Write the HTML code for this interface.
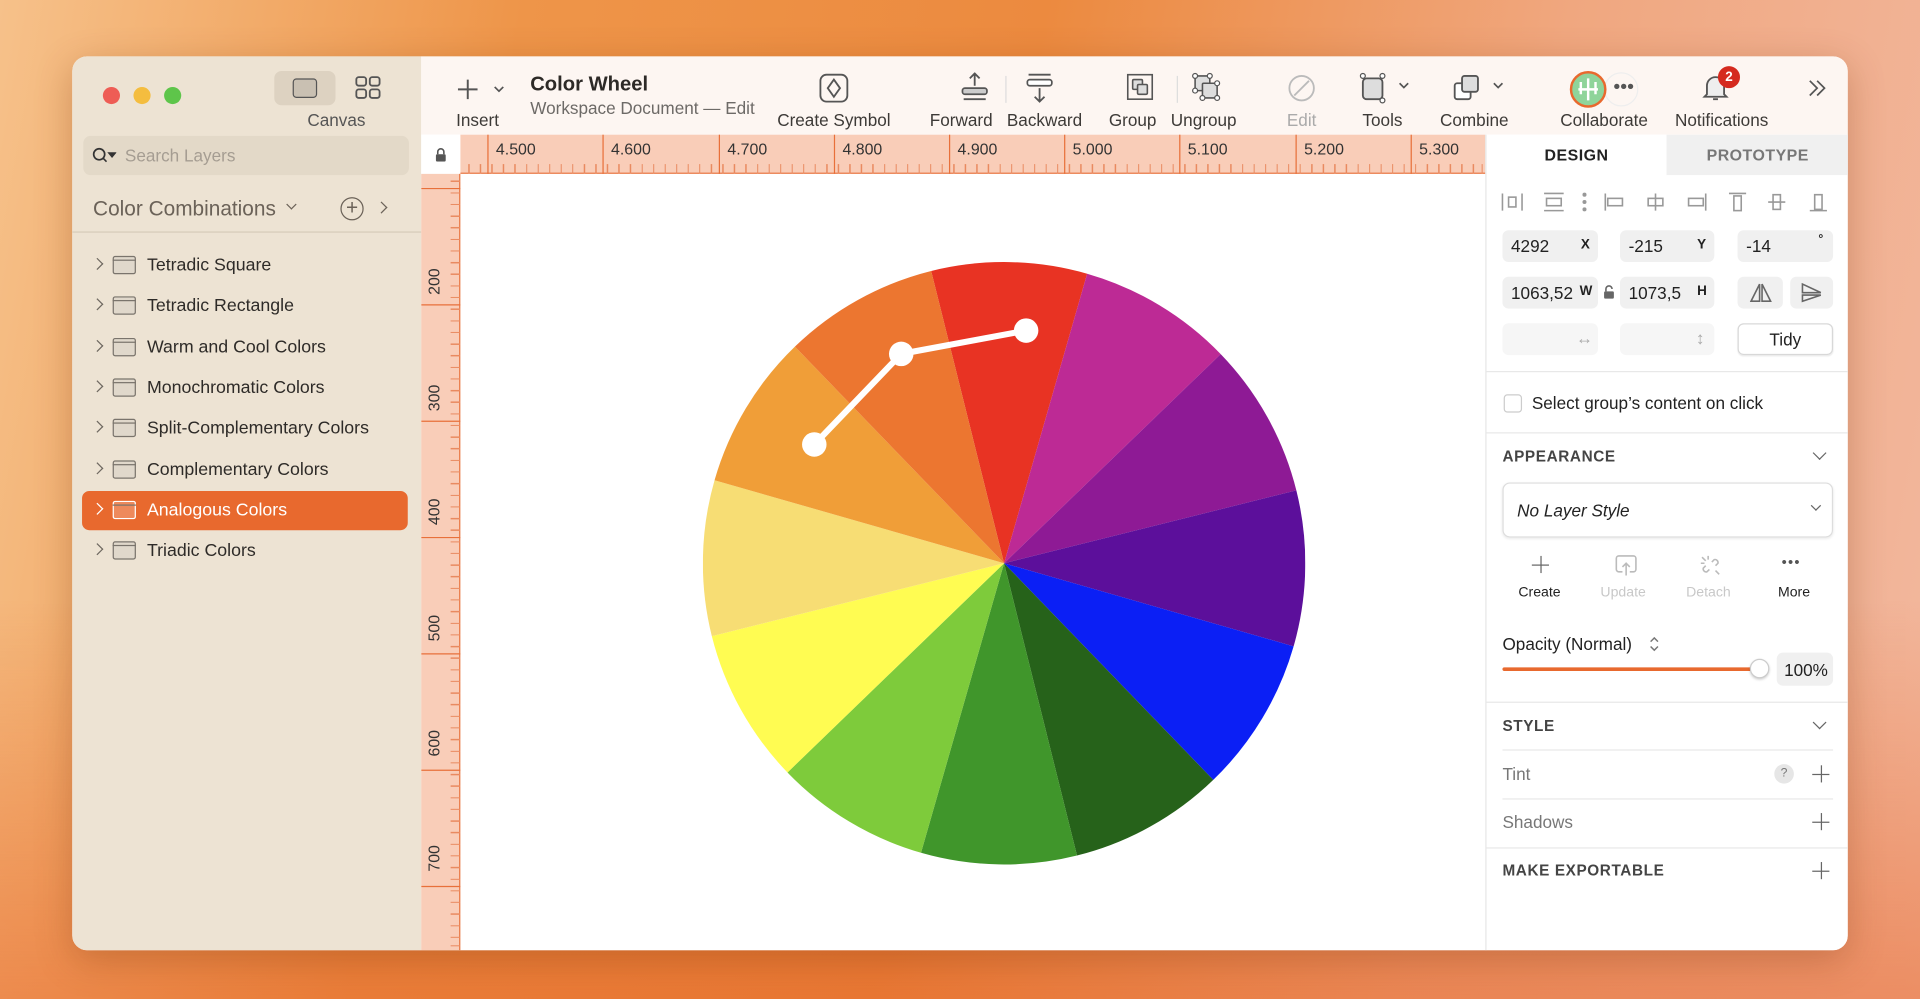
<!DOCTYPE html>
<html><head><meta charset="utf-8"><style>
*{box-sizing:border-box;margin:0;padding:0}
html,body{width:1920px;height:999px;overflow:hidden}
body{background:linear-gradient(100deg,#f6c18a 0%,#ee9549 25%,#ec8a3f 50%,#f0a77f 75%,#f2b89f 100%);font-family:"Liberation Sans",sans-serif}
#s{position:absolute;left:0;top:0;width:1568px;height:816px;transform:scale(1.22449);transform-origin:0 0;background:linear-gradient(180deg,rgba(0,0,0,0) 60%,rgba(230,100,40,.5) 100%)}
.a{position:absolute}
.win{left:59px;top:46px;width:1450px;height:730px;border-radius:12px;overflow:hidden;background:#fff;box-shadow:0 8px 30px rgba(120,50,10,.3)}
.sb{left:0;top:0;width:285px;height:730px;background:#ede3d3}
.tb{left:285px;top:0;width:1165px;height:64px;background:#fdf6f2}
.lbl{position:absolute;font-size:14px;color:#3d3a37;transform:translateX(-50%);white-space:nowrap;top:44px}
.li{position:absolute;left:8px;width:266px;height:32px;font-size:14.5px;color:#2e2b28}
.li span{position:absolute;left:53px;top:8px}
.li .ch{position:absolute;left:9px;top:11px;width:7px;height:7px;border-right:1.6px solid #6e6860;border-bottom:1.6px solid #6e6860;transform:rotate(-45deg)}
.li .fd{position:absolute;left:25px;top:8px;width:19px;height:15px;border:1.3px solid #7a746c;border-radius:2px;background:#e0d8cb}
.li .fd:before{content:"";position:absolute;left:-1px;top:2px;width:19px;border-top:1.3px solid #7a746c}
.rp{left:1154px;top:64px;width:296px;height:666px;background:#fff;border-left:1px solid #e6e6e6}
.fld{position:absolute;height:26px;background:#f0f0f0;border-radius:5px;font-size:14px;color:#222}
.hd{position:absolute;left:13px;font-size:12.5px;font-weight:bold;color:#444;letter-spacing:.5px}
.hr{position:absolute;left:0;width:296px;border-top:1px solid #e8e8e8}
.pl{position:absolute;width:14px;height:14px}
.pl:before{content:"";position:absolute;left:0;top:6.5px;width:14px;border-top:1.3px solid #666}
.pl:after{content:"";position:absolute;top:0;left:6.5px;height:14px;border-left:1.3px solid #666}
</style></head><body><div id="s">
<div class="a win">
 <div class="a sb">
  <div class="a" style="left:25px;top:25px;width:14px;height:14px;border-radius:50%;background:#ee5d55"></div>
  <div class="a" style="left:50px;top:25px;width:14px;height:14px;border-radius:50%;background:#f4bd3f"></div>
  <div class="a" style="left:75px;top:25px;width:14px;height:14px;border-radius:50%;background:#5ec54a"></div>
  <div class="a" style="left:165px;top:12px;width:50px;height:28px;border-radius:6px;background:#ddd2c1"></div>
  <div class="a" style="left:180px;top:18px;width:20px;height:16px;border:1.6px solid #555;border-radius:3px;background:#c9c0b2"></div>
  <svg class="a" style="left:231px;top:16px" width="22" height="20"><g fill="none" stroke="#555" stroke-width="1.5"><rect x="1" y="1" width="8" height="7" rx="2"/><rect x="12" y="1" width="8" height="7" rx="2"/><rect x="1" y="11" width="8" height="7" rx="2"/><rect x="12" y="11" width="8" height="7" rx="2"/></g></svg>
  <div class="a" style="left:192px;top:44px;font-size:14px;color:#555">Canvas</div>
  <div class="a" style="left:9px;top:65px;width:266px;height:32px;border-radius:6px;background:#e3d9c8"></div>
  <svg class="a" style="left:16px;top:74px" width="20" height="14"><circle cx="6" cy="6" r="4.5" fill="none" stroke="#333" stroke-width="1.4"/><path d="M9 9l3 3M14 5h5l-2.5 3z" stroke="#333" fill="#333" stroke-width="1.3"/></svg>
  <div class="a" style="left:43px;top:73px;font-size:14px;color:#a59d92">Search Layers</div>
  <div class="a" style="left:17px;top:115px;font-size:17px;color:#6b6258">Color Combinations</div>
  <div class="a" style="left:176px;top:118px;width:6px;height:6px;border-right:1.4px solid #6b6258;border-bottom:1.4px solid #6b6258;transform:rotate(45deg)"></div>
  <div class="a" style="left:219px;top:115px;width:19px;height:19px;border:1.4px solid #6b6258;border-radius:50%;font-size:17px;line-height:15px;text-align:center;color:#6b6258">+</div>
  <div class="a" style="left:249px;top:120px;width:7px;height:7px;border-right:1.4px solid #6b6258;border-bottom:1.4px solid #6b6258;transform:rotate(-45deg)"></div>
  <div class="a" style="left:0;top:143px;width:285px;border-top:1px solid #d6cbb9"></div>
  <div class="li" style="top:155px"><i class="ch"></i><i class="fd"></i><span>Tetradic Square</span></div>
  <div class="li" style="top:188px"><i class="ch"></i><i class="fd"></i><span>Tetradic Rectangle</span></div>
  <div class="li" style="top:222px"><i class="ch"></i><i class="fd"></i><span>Warm and Cool Colors</span></div>
  <div class="li" style="top:255px"><i class="ch"></i><i class="fd"></i><span>Monochromatic Colors</span></div>
  <div class="li" style="top:288px"><i class="ch"></i><i class="fd"></i><span>Split-Complementary Colors</span></div>
  <div class="li" style="top:322px"><i class="ch"></i><i class="fd"></i><span>Complementary Colors</span></div>
  <div class="li" style="top:355px;background:#e8692e;border-radius:6px;color:#fff"><i class="ch" style="border-color:#fff"></i><i class="fd" style="border-color:#fff;background:#ee8a5c"></i><span>Analogous Colors</span></div>
  <div class="li" style="top:388px"><i class="ch"></i><i class="fd"></i><span>Triadic Colors</span></div>
 </div>
 <div class="a tb">
  <svg class="a" style="left:28px;top:17px" width="40" height="20"><path d="M10 2v16M2 10h16" stroke="#555" stroke-width="1.6"/><path d="M32 8l3.5 3.5L39 8" fill="none" stroke="#555" stroke-width="1.4"/></svg>
  <div class="lbl" style="left:46px">Insert</div>
  <div class="a" style="left:89px;top:14px;font-size:16.5px;font-weight:bold;color:#2d2a27">Color Wheel</div>
  <div class="a" style="left:89px;top:34px;font-size:14px;color:#6d6a67">Workspace Document — Edit</div>
  <svg class="a" style="left:325px;top:14px" width="24" height="24"><rect x="1" y="1" width="22" height="22" rx="5" fill="none" stroke="#555" stroke-width="1.5"/><path d="M12 5l5 7-5 7-5-7z" fill="none" stroke="#555" stroke-width="1.5"/></svg>
  <div class="lbl" style="left:337px">Create Symbol</div>
  <svg class="a" style="left:440px;top:13px" width="24" height="26"><path d="M12 1v10M8 5l4-4 4 4" fill="none" stroke="#555" stroke-width="1.5"/><rect x="2" y="13" width="20" height="5" rx="2" fill="#ccc" stroke="#555" stroke-width="1.4"/><path d="M3 22h18" stroke="#555" stroke-width="1.5"/></svg>
  <div class="lbl" style="left:441px">Forward</div>
  <div class="a" style="left:477px;top:16px;height:22px;border-left:1px solid #ddd"></div>
  <svg class="a" style="left:493px;top:13px" width="24" height="26"><path d="M3 2h18" stroke="#555" stroke-width="1.5"/><rect x="2" y="6" width="20" height="5" rx="2" fill="#fff" stroke="#555" stroke-width="1.4"/><path d="M12 13v11M8 20l4 4 4-4" fill="none" stroke="#555" stroke-width="1.5"/></svg>
  <div class="lbl" style="left:509px">Backward</div>
  <svg class="a" style="left:575px;top:13px" width="24" height="24"><rect x="2" y="2" width="20" height="20" fill="none" stroke="#555" stroke-width="1.3"/><rect x="6" y="6" width="8" height="8" rx="1" fill="#ddd" stroke="#555" stroke-width="1.3"/><rect x="10" y="10" width="8" height="8" rx="1" fill="#ddd" stroke="#555" stroke-width="1.3"/></svg>
  <div class="lbl" style="left:581px">Group</div>
  <div class="a" style="left:617px;top:16px;height:22px;border-left:1px solid #ddd"></div>
  <svg class="a" style="left:629px;top:13px" width="24" height="24"><rect x="3" y="3" width="12" height="12" rx="1" fill="#ddd" stroke="#555" stroke-width="1.3"/><rect x="9" y="9" width="12" height="12" rx="1" fill="#ddd" stroke="#555" stroke-width="1.3"/><g fill="#fff" stroke="#555"><circle cx="3" cy="3" r="2"/><circle cx="15" cy="3" r="2"/><circle cx="3" cy="15" r="2"/><circle cx="21" cy="21" r="2"/><circle cx="9" cy="21" r="2"/><circle cx="21" cy="9" r="2"/></g></svg>
  <div class="lbl" style="left:639px">Ungroup</div>
  <svg class="a" style="left:707px;top:14px" width="24" height="24"><circle cx="12" cy="12" r="10" fill="none" stroke="#bbb" stroke-width="1.5"/><path d="M6 18L18 6" stroke="#bbb" stroke-width="1.5"/></svg>
  <div class="lbl" style="left:719px;color:#aaa">Edit</div>
  <svg class="a" style="left:766px;top:13px" width="46" height="26"><rect x="3" y="5" width="16" height="17" rx="3" fill="#ddd" stroke="#555" stroke-width="1.5"/><g fill="#fff" stroke="#555"><circle cx="3" cy="3" r="2"/><circle cx="19" cy="3" r="2"/><circle cx="19" cy="23" r="2"/></g><path d="M33 9l3.5 3.5L40 9" fill="none" stroke="#555" stroke-width="1.4"/></svg>
  <div class="lbl" style="left:785px">Tools</div>
  <svg class="a" style="left:842px;top:13px" width="46" height="26"><rect x="2" y="9" width="13" height="13" rx="2" fill="#fff" stroke="#555" stroke-width="1.5"/><rect x="8" y="3" width="13" height="13" rx="2" fill="#ddd" stroke="#555" stroke-width="1.5"/><path d="M34 9l3.5 3.5L41 9" fill="none" stroke="#555" stroke-width="1.4"/></svg>
  <div class="lbl" style="left:860px">Combine</div>
  <div class="a" style="left:966px;top:13px;width:28px;height:28px;border-radius:50%;border:1px solid #eee;font-size:16px;line-height:24px;text-align:center;color:#555;padding-left:4px">•••</div>
  <div class="a" style="left:938px;top:12px;width:30px;height:30px;border-radius:50%;border:2px solid #e8692e;background:#8fd49a"></div>
  <svg class="a" style="left:944px;top:17px" width="18" height="20"><path d="M9 1v18M3 4v10M15 4v10M1 10h16" stroke="#fff" stroke-width="2"/></svg>
  <div class="lbl" style="left:966px">Collaborate</div>
  <svg class="a" style="left:1046px;top:14px" width="22" height="24"><path d="M4 17V10a7 7 0 0 1 14 0v7l2 2H2z" fill="#eee" stroke="#555" stroke-width="1.5"/><path d="M9 21h4" stroke="#555" stroke-width="1.5"/></svg>
  <div class="a" style="left:1059px;top:8px;width:18px;height:18px;border-radius:50%;background:#d52a1f;color:#fff;font-size:11px;font-weight:bold;text-align:center;line-height:18px">2</div>
  <div class="lbl" style="left:1062px">Notifications</div>
  <svg class="a" style="left:1131px;top:18px" width="18" height="16"><path d="M3 2l6 6-6 6M9 2l6 6-6 6" fill="none" stroke="#555" stroke-width="1.4"/></svg>
 </div>
 <!-- rulers -->
 <div class="a" style="left:285px;top:64px;width:32px;height:32px;background:#fff"></div>
 <svg class="a" style="left:296px;top:74px" width="10" height="12"><path d="M2.5 6V4a2.5 2.5 0 0 1 5 0v2" fill="none" stroke="#555" stroke-width="1.3"/><rect x="1" y="6" width="8" height="6" rx="1" fill="#555"/></svg>
 <div class="a" style="left:317px;top:64px;width:837px;height:32px;background:#f9cdb8;border-bottom:1px solid #e8703a"></div>
 <div class="a" style="left:317px;top:88px;width:837px;height:8px;background:repeating-linear-gradient(90deg,#e98a60 0 1px,transparent 1px 9.43px);background-position:-3px 0"></div>
 <div class="a" style="left:285px;top:96px;width:32px;height:634px;background:#f9cdb8;border-right:1px solid #e8703a"></div>
 <div class="a" style="left:309px;top:96px;width:8px;height:634px;background:repeating-linear-gradient(180deg,#e98a60 0 1px,transparent 1px 9.5px);background-position:0 -4px"></div>
 <div class="a" style="left:317px;top:96px;width:837px;height:634px;background:#fff"></div>
 <div class="a" style="top:64px;left:0;width:1154px;height:32px;font-size:13px;color:#333">
  <div class="a" style="left:339px;height:32px;border-left:1px solid #e8703a"></div><div class="a" style="left:346px;top:4px">4.500</div>
  <div class="a" style="left:433px;height:32px;border-left:1px solid #e8703a"></div><div class="a" style="left:440px;top:4px">4.600</div>
  <div class="a" style="left:528px;height:32px;border-left:1px solid #e8703a"></div><div class="a" style="left:535px;top:4px">4.700</div>
  <div class="a" style="left:622px;height:32px;border-left:1px solid #e8703a"></div><div class="a" style="left:629px;top:4px">4.800</div>
  <div class="a" style="left:716px;height:32px;border-left:1px solid #e8703a"></div><div class="a" style="left:723px;top:4px">4.900</div>
  <div class="a" style="left:810px;height:32px;border-left:1px solid #e8703a"></div><div class="a" style="left:817px;top:4px">5.000</div>
  <div class="a" style="left:904px;height:32px;border-left:1px solid #e8703a"></div><div class="a" style="left:911px;top:4px">5.100</div>
  <div class="a" style="left:999px;height:32px;border-left:1px solid #e8703a"></div><div class="a" style="left:1006px;top:4px">5.200</div>
  <div class="a" style="left:1093px;height:32px;border-left:1px solid #e8703a"></div><div class="a" style="left:1100px;top:4px">5.300</div>
 </div>
 <svg class="a" style="left:285px;top:96px" width="32" height="634" font-family="Liberation Sans" font-size="13" fill="#333">
  <g stroke="#e8703a"><path d="M0 107h32M0 202h32M0 297h32M0 392h32M0 487h32M0 582h32M0 12h32"/></g>
  <text transform="translate(15,88) rotate(-90)" text-anchor="middle">200</text>
  <text transform="translate(15,183) rotate(-90)" text-anchor="middle">300</text>
  <text transform="translate(15,276) rotate(-90)" text-anchor="middle">400</text>
  <text transform="translate(15,371) rotate(-90)" text-anchor="middle">500</text>
  <text transform="translate(15,465) rotate(-90)" text-anchor="middle">600</text>
  <text transform="translate(15,559) rotate(-90)" text-anchor="middle">700</text>
 </svg>
 <!-- wheel -->
 <svg class="a" style="left:515px;top:168px" width="492px" height="492px" viewBox="-246 -246 492 492">
  <g transform="rotate(1)">
   <path d="M0 0L-63.7-237.6A246 246 0 0 1 63.7-237.6Z" fill="#e83323"/>
   <path d="M0 0L63.7-237.6A246 246 0 0 1 173.9-173.9Z" fill="#bd2a95"/>
   <path d="M0 0L173.9-173.9A246 246 0 0 1 237.6-63.7Z" fill="#8e1a95"/>
   <path d="M0 0L237.6-63.7A246 246 0 0 1 237.6 63.7Z" fill="#5c0f9b"/>
   <path d="M0 0L237.6 63.7A246 246 0 0 1 173.9 173.9Z" fill="#0b1ff5"/>
   <path d="M0 0L173.9 173.9A246 246 0 0 1 63.7 237.6Z" fill="#26621a"/>
   <path d="M0 0L63.7 237.6A246 246 0 0 1 -63.7 237.6Z" fill="#40962b"/>
   <path d="M0 0L-63.7 237.6A246 246 0 0 1 -173.9 173.9Z" fill="#7ecb3b"/>
   <path d="M0 0L-173.9 173.9A246 246 0 0 1 -237.6 63.7Z" fill="#fffc52"/>
   <path d="M0 0L-237.6 63.7A246 246 0 0 1 -237.6 -63.7Z" fill="#f7dd74"/>
   <path d="M0 0L-237.6 -63.7A246 246 0 0 1 -173.9 -173.9Z" fill="#f09e38"/>
   <path d="M0 0L-173.9 -173.9A246 246 0 0 1 -63.7 -237.6Z" fill="#ec7630"/>
  </g>
  <g transform="translate(-820,-460)"><path d="M665 363L736 289L838 270" fill="none" stroke="#fff" stroke-width="5"/><circle cx="665" cy="363" r="10" fill="#fff"/><circle cx="736" cy="289" r="10" fill="#fff"/><circle cx="838" cy="270" r="10" fill="#fff"/></g>
 </svg>
 <!-- right panel -->
 <div class="a rp">
  <div class="a" style="left:0;top:0;width:147px;height:33px;font-size:13px;font-weight:bold;color:#222;text-align:center;line-height:33px;letter-spacing:.4px">DESIGN</div>
  <div class="a" style="left:147px;top:0;width:149px;height:33px;background:#f0f0f0;font-size:13px;font-weight:bold;color:#777;text-align:center;line-height:33px;letter-spacing:.4px">PROTOTYPE</div>
  <svg class="a" style="left:10px;top:45px" width="275" height="20" fill="none" stroke="#999" stroke-width="1.3">
   <path d="M3 3v14M19 3v14"/><rect x="8" y="6" width="6" height="8"/>
   <path d="M37 3h16M37 17h16"/><rect x="39" y="7" width="12" height="6"/>
   <circle cx="70" cy="4" r="1" fill="#999"/><circle cx="70" cy="10" r="1" fill="#999"/><circle cx="70" cy="16" r="1" fill="#999"/>
   <path d="M87 3v14"/><rect x="89" y="7" width="12" height="6"/>
   <path d="M128 3v14"/><rect x="122" y="7" width="12" height="6"/>
   <path d="M169 3v14"/><rect x="155" y="7" width="12" height="6"/>
   <path d="M188 3h14"/><rect x="192" y="5" width="6" height="12"/>
   <path d="M220 10h14"/><rect x="224" y="4" width="6" height="12"/>
   <path d="M254 17h14"/><rect x="258" y="4" width="6" height="12"/>
  </svg>
  <div class="fld" style="left:13px;top:78px;width:78px"><span class="a" style="left:7px;top:5px">4292</span><b class="a" style="left:64px;top:6px;font-size:11px">X</b></div>
  <div class="fld" style="left:109px;top:78px;width:77px"><span class="a" style="left:7px;top:5px">-215</span><b class="a" style="left:63px;top:6px;font-size:11px">Y</b></div>
  <div class="fld" style="left:205px;top:78px;width:78px"><span class="a" style="left:7px;top:5px">-14</span><b class="a" style="left:66px;top:2px;font-size:10px">°</b></div>
  <div class="fld" style="left:13px;top:116px;width:78px"><span class="a" style="left:7px;top:5px">1063,52</span><b class="a" style="left:63px;top:6px;font-size:11px">W</b></div>
  <svg class="a" style="left:95px;top:122px" width="10" height="12"><path d="M2.5 6V4a2.5 2.5 0 0 1 5 0" fill="none" stroke="#666" stroke-width="1.3"/><rect x="1" y="6" width="8" height="6" rx="1" fill="#666"/></svg>
  <div class="fld" style="left:109px;top:116px;width:77px"><span class="a" style="left:7px;top:5px">1073,5</span><b class="a" style="left:63px;top:6px;font-size:11px">H</b></div>
  <div class="fld" style="left:205px;top:116px;width:37px"><svg class="a" style="left:10px;top:5px" width="18" height="16" fill="none" stroke="#666" stroke-width="1.3"><path d="M8 1L1 15h7zM10 1l7 14h-7z"/></svg></div>
  <div class="fld" style="left:248px;top:116px;width:35px"><svg class="a" style="left:9px;top:5px" width="18" height="16" fill="none" stroke="#666" stroke-width="1.3"><path d="M1 1l15 7H1zM1 10h15L1 15z"/></svg></div>
  <div class="fld" style="left:13px;top:154px;width:78px;background:#f6f6f6;color:#aaa"><span class="a" style="left:60px;top:4px">↔</span></div>
  <div class="fld" style="left:109px;top:154px;width:77px;background:#f6f6f6;color:#aaa"><span class="a" style="left:62px;top:4px">↕</span></div>
  <div class="a" style="left:205px;top:154px;width:78px;height:26px;border:1px solid #d8d8d8;border-radius:5px;font-size:14px;text-align:center;line-height:24px;color:#222;box-shadow:0 1px 1px rgba(0,0,0,.08)">Tidy</div>
  <div class="hr" style="top:193px"></div>
  <div class="a" style="left:14px;top:212px;width:15px;height:15px;border:1px solid #ccc;border-radius:3px"></div>
  <div class="a" style="left:37px;top:211px;font-size:14px;color:#222">Select group’s content on click</div>
  <div class="hr" style="top:243px"></div>
  <div class="hd" style="top:256px">APPEARANCE</div>
  <div class="a" style="left:268px;top:256px;width:8px;height:8px;border-right:1.3px solid #666;border-bottom:1.3px solid #666;transform:rotate(45deg)"></div>
  <div class="a" style="left:13px;top:284px;width:270px;height:45px;border:1px solid #ddd;border-radius:6px;box-shadow:0 1px 2px rgba(0,0,0,.08)"><i class="a" style="left:11px;top:14px;font-size:14px;color:#222">No Layer Style</i><span class="a" style="left:252px;top:15px;width:6px;height:6px;border-right:1.2px solid #666;border-bottom:1.2px solid #666;transform:rotate(45deg)"></span></div>
  <div class="pl" style="left:37px;top:344px"></div>
  <div class="a" style="left:26px;top:368px;font-size:11.5px;color:#222">Create</div>
  <svg class="a" style="left:105px;top:343px" width="18" height="18" fill="none" stroke="#bbb" stroke-width="1.3"><path d="M6 14H3a2 2 0 0 1-2-2V3a2 2 0 0 1 2-2h12a2 2 0 0 1 2 2v9a2 2 0 0 1-2 2h-3M9 17V7M6 10l3-3 3 3"/></svg>
  <div class="a" style="left:93px;top:368px;font-size:11.5px;color:#c8c8c8">Update</div>
  <svg class="a" style="left:174px;top:343px" width="18" height="18" fill="none" stroke="#bbb" stroke-width="1.3"><path d="M8 12l-2 2a2.5 2.5 0 0 1-3-3l2-2M10 6l2-2a2.5 2.5 0 0 1 3 3l-2 2M2 2l3 3M16 16l-3-3M7 1v3M1 7h3"/></svg>
  <div class="a" style="left:163px;top:368px;font-size:11.5px;color:#c8c8c8">Detach</div>
  <div class="a" style="left:241px;top:342px;font-size:12px;color:#555;letter-spacing:1px">•••</div>
  <div class="a" style="left:238px;top:368px;font-size:11.5px;color:#222">More</div>
  <div class="a" style="left:13px;top:408px;font-size:14px;color:#222">Opacity (Normal)</div>
  <svg class="a" style="left:132px;top:409px" width="10" height="14" fill="none" stroke="#777" stroke-width="1.2"><path d="M2 5l3-3 3 3M2 9l3 3 3-3"/></svg>
  <div class="a" style="left:13px;top:435px;width:210px;height:3px;background:#e8692e;border-radius:2px"></div>
  <div class="a" style="left:215px;top:428px;width:16px;height:16px;border-radius:50%;background:#fff;border:1px solid #ccc;box-shadow:0 1px 2px rgba(0,0,0,.2)"></div>
  <div class="fld" style="left:237px;top:423px;width:46px;height:27px"><span class="a" style="left:6px;top:6px">100%</span></div>
  <div class="hr" style="top:463px"></div>
  <div class="hd" style="top:476px">STYLE</div>
  <div class="a" style="left:268px;top:476px;width:8px;height:8px;border-right:1.3px solid #666;border-bottom:1.3px solid #666;transform:rotate(45deg)"></div>
  <div class="hr" style="top:502px;left:13px;width:270px"></div>
  <div class="a" style="left:13px;top:514px;font-size:14px;color:#777">Tint</div>
  <div class="a" style="left:235px;top:514px;width:16px;height:16px;border-radius:50%;background:#e6e6e6;font-size:10px;color:#777;text-align:center;line-height:16px">?</div>
  <div class="pl" style="left:266px;top:515px"></div>
  <div class="hr" style="top:542px;left:13px;width:270px"></div>
  <div class="a" style="left:13px;top:553px;font-size:14px;color:#777">Shadows</div>
  <div class="pl" style="left:266px;top:554px"></div>
  <div class="hr" style="top:582px"></div>
  <div class="hd" style="top:594px">MAKE EXPORTABLE</div>
  <div class="pl" style="left:266px;top:594px"></div>
 </div>
</div>
</div></body></html>
